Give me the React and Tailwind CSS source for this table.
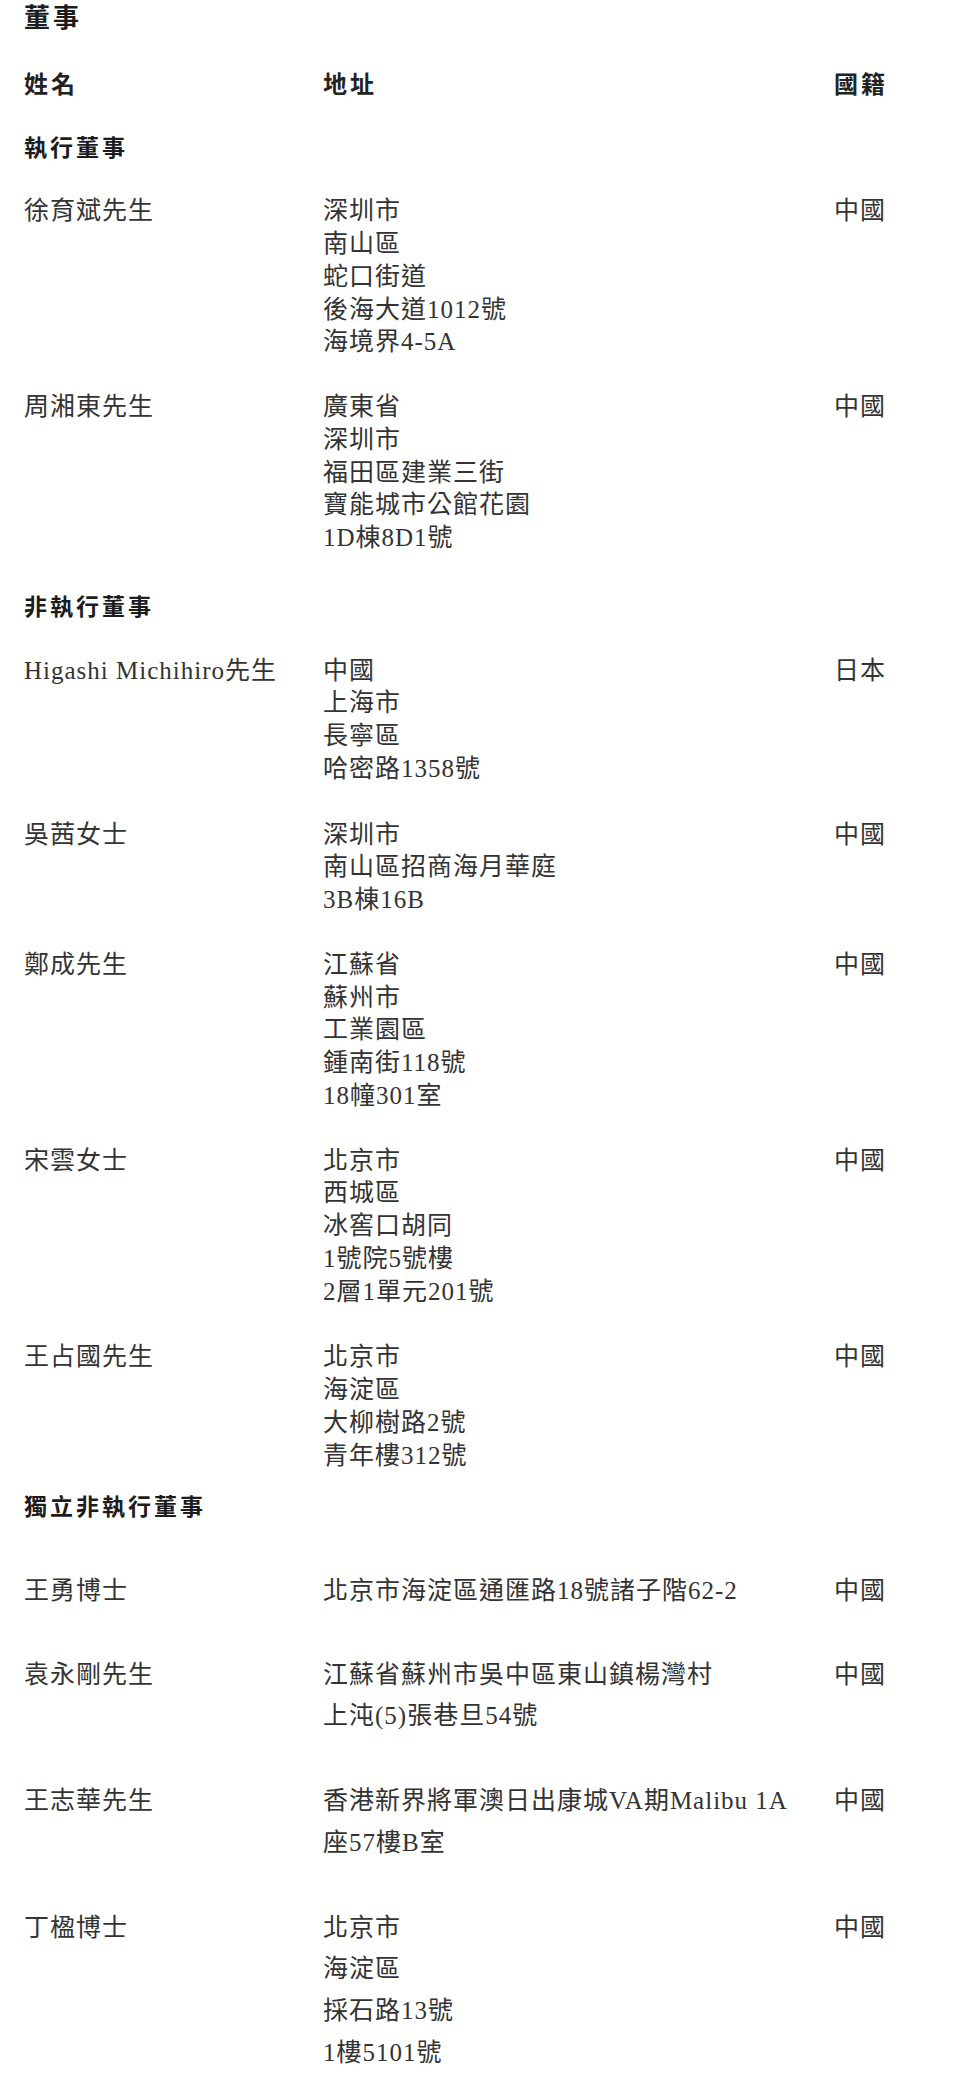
import React from "react";

const sans = { fontFamily: '"Noto Sans CJK TC", "Noto Sans CJK SC", sans-serif' };

const Row = ({ name, lines, nat, className = "" }) => (
  <div className={"grid grid-cols-[299px_511px_1fr] " + className}>
    <div>{name}</div>
    <div>
      {lines.map((l, i) => (
        <div key={i}>{l}</div>
      ))}
    </div>
    <div>{nat}</div>
  </div>
);

const Section = ({ children, className = "" }) => (
  <div
    className={"text-[23px] font-bold tracking-[3px] text-[#1c1c1c] leading-[32.75px] " + className}
    style={sans}
  >
    {children}
  </div>
);

export default function App() {
  return (
    <div
      className="w-[960px] min-h-[2077px] bg-white pl-[24px] text-[#333333] text-[25px] tracking-[1px]"
      style={{ fontFamily: '"Liberation Serif", "Noto Sans CJK TC", "Noto Sans CJK SC", serif' }}
    >
      <div
        className="text-[26px] font-bold tracking-[3px] text-[#1c1c1c] leading-[32.75px]"
        style={sans}
      >
        董事
      </div>

      <div
        className="mt-[34px] grid grid-cols-[299px_511px_1fr] text-[24px] font-semibold tracking-[3px] text-[#222] leading-[32.75px]"
        style={sans}
      >
        <div>姓名</div>
        <div>地址</div>
        <div>國籍</div>
      </div>

      <Section className="mt-[30px]">執行董事</Section>

      <div className="leading-[32.75px]">
        <Row
          className="mt-[33px]"
          name="徐育斌先生"
          lines={["深圳市", "南山區", "蛇口街道", "後海大道1012號", "海境界4-5A"]}
          nat="中國"
        />
        <Row
          className="mt-[32px]"
          name="周湘東先生"
          lines={["廣東省", "深圳市", "福田區建業三街", "寶能城市公館花園", "1D棟8D1號"]}
          nat="中國"
        />
      </div>

      <Section className="mt-[34px]">非執行董事</Section>

      <div className="leading-[32.75px]">
        <Row
          className="mt-[33px]"
          name="Higashi Michihiro先生"
          lines={["中國", "上海市", "長寧區", "哈密路1358號"]}
          nat="日本"
        />
        <Row
          className="mt-[33px]"
          name="吳茜女士"
          lines={["深圳市", "南山區招商海月華庭", "3B棟16B"]}
          nat="中國"
        />
        <Row
          className="mt-[32px]"
          name="鄭成先生"
          lines={["江蘇省", "蘇州市", "工業園區", "鍾南街118號", "18幢301室"]}
          nat="中國"
        />
        <Row
          className="mt-[32px]"
          name="宋雲女士"
          lines={["北京市", "西城區", "冰窖口胡同", "1號院5號樓", "2層1單元201號"]}
          nat="中國"
        />
        <Row
          className="mt-[33px]"
          name="王占國先生"
          lines={["北京市", "海淀區", "大柳樹路2號", "青年樓312號"]}
          nat="中國"
        />
      </div>

      <Section className="mt-[17px]">獨立非執行董事</Section>

      <div className="leading-[41.7px]">
        <Row
          className="mt-[48px]"
          name="王勇博士"
          lines={["北京市海淀區通匯路18號諸子階62-2"]}
          nat="中國"
        />
        <Row
          className="mt-[42px]"
          name="袁永剛先生"
          lines={["江蘇省蘇州市吳中區東山鎮楊灣村", "上沌(5)張巷旦54號"]}
          nat="中國"
        />
        <Row
          className="mt-[43px]"
          name="王志華先生"
          lines={["香港新界將軍澳日出康城VA期Malibu 1A", "座57樓B室"]}
          nat="中國"
        />
        <Row
          className="mt-[43px]"
          name="丁楹博士"
          lines={["北京市", "海淀區", "採石路13號", "1樓5101號"]}
          nat="中國"
        />
      </div>
    </div>
  );
}
